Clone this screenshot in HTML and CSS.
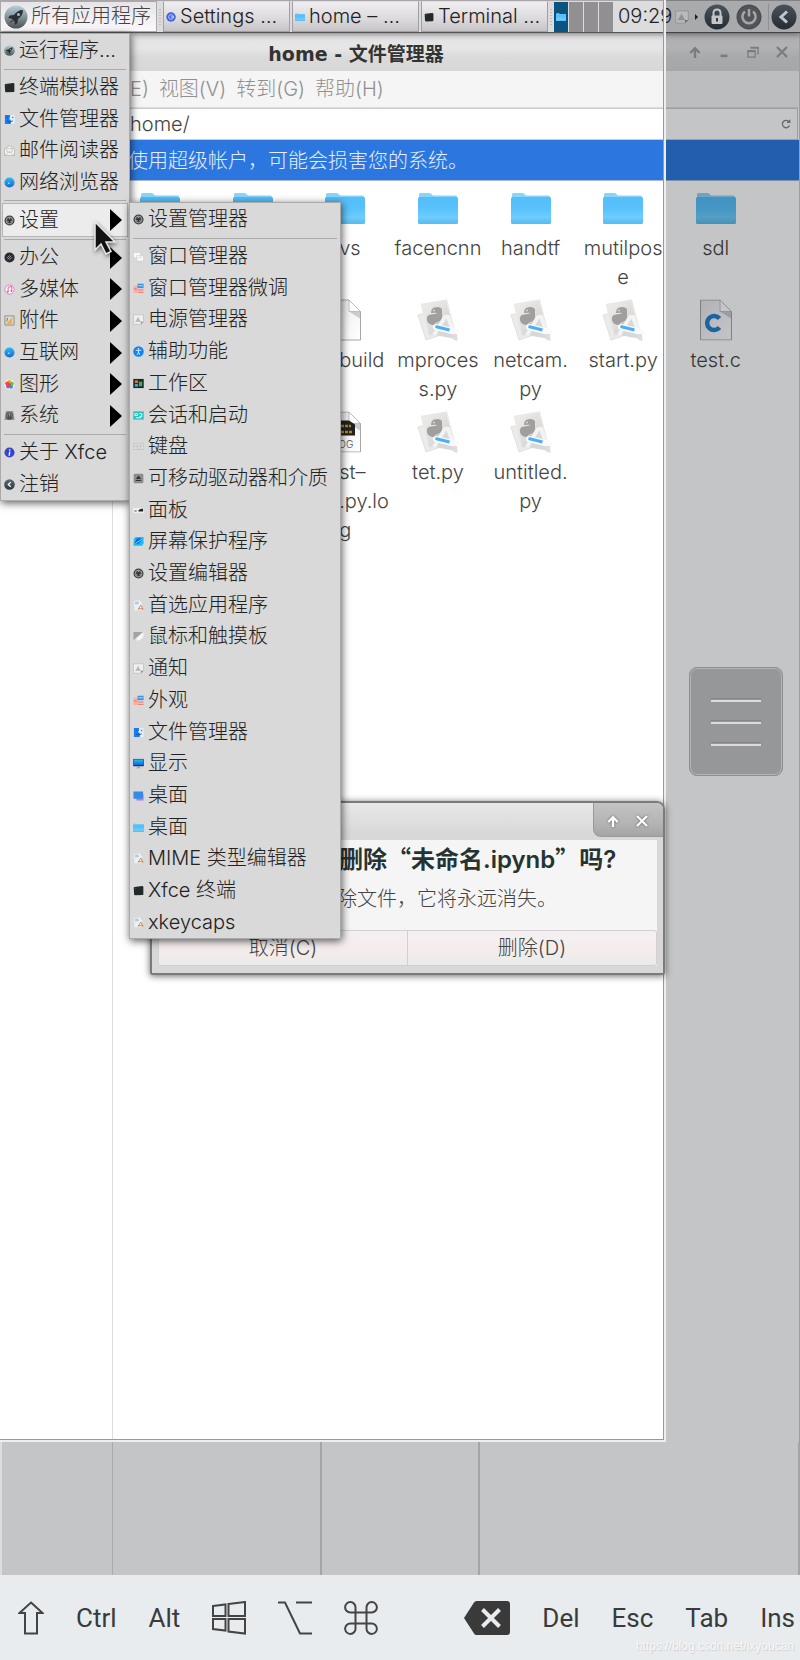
FILE: index.html
```html
<!DOCTYPE html>
<html lang="zh-CN">
<head>
    <meta charset="UTF-8">
    <meta name="viewport" content="width=device-width, initial-scale=1">
    <title>home - 文件管理器</title>
    <link rel="stylesheet" href="styles.css">
</head>
<body>
    <!-- icon sprite -->
    <svg class="sprite" aria-hidden="true">
        <defs>
            <linearGradient id="g-folder" x1="0" y1="0" x2="0" y2="1"><stop offset="0" stop-color="#55bdf9"/><stop offset=".4" stop-color="#58c1fb"/><stop offset=".75" stop-color="#6dcdfd"/><stop offset="1" stop-color="#5ab9ee"/></linearGradient>
            <linearGradient id="g-dark" x1="0" y1="0" x2="0" y2="1"><stop offset="0" stop-color="#5f6a73"/><stop offset="1" stop-color="#2c353d"/></linearGradient>
            <linearGradient id="g-rocket" x1="0" y1="0" x2="0" y2="1"><stop offset="0" stop-color="#b9d0da"/><stop offset="1" stop-color="#4d5458"/></linearGradient>
            <linearGradient id="g-paper" x1="0" y1="0" x2="1" y2="1"><stop offset="0" stop-color="#e6e4e6"/><stop offset=".5" stop-color="#f5f3f6"/><stop offset="1" stop-color="#ffffff"/></linearGradient>
            <linearGradient id="g-photo" x1="0" y1="0" x2="1" y2="1"><stop offset="0" stop-color="#f0efee"/><stop offset="1" stop-color="#cfcdcc"/></linearGradient>
            <linearGradient id="g-blue" x1="0" y1="0" x2="0" y2="1"><stop offset="0" stop-color="#1cc0fa"/><stop offset="1" stop-color="#1667d8"/></linearGradient>
        </defs>
        <symbol id="i-folder" viewBox="0 0 40 32">
            <path fill="#86d6fb" d="M1 8V2.500Q1 1 2.500 1H11q1.500 0 2.500 1l1.500 1.500H37.500Q39 3.500 39 5v4H1z"/>
            <path fill="url(#g-folder)" d="M0 6.500Q0 5 1.500 5H38.500Q40 5 40 6.500V30.500Q40 32 38.500 32H1.500Q0 32 0 30.500z"/>
        </symbol>
        <symbol id="i-rocket" viewBox="0 0 24 24">
            <circle cx="12" cy="12" r="11.500" fill="url(#g-rocket)"/>
            <path fill="#2b3033" d="M19 5c-4 0-7 2-9 5l-4 .5L4 13l3.500.5 3 3L11 20l2.500-2 .5-4c3-2 5-5 5-9zM8 15l-2.500 3.500L9 16z"/>
            <circle cx="14.500" cy="9.500" r="1.500" fill="#a9bac2"/>
        </symbol>
        <symbol id="i-term" viewBox="0 0 12 12"><path fill="#23282a" d="M1.500 2.200 10 1.200Q11.200 1.200 11.300 2.300V10q0 1-1 1L2.500 11.300Q1.300 11.200 1.200 10L.8 3.200Q.8 2.400 1.500 2.200z"/><path fill="#8a3b34" d="M2 3h1.500v1H2z"/></symbol>
        <symbol id="i-finder" viewBox="0 0 12 12"><path fill="#1b7df2" d="M1 1h6L6 6h1.500v5H1z"/><path fill="#e4effb" d="M7 1h4.500v10H7.500V6H6z"/><path fill="none" stroke="#124a91" d="M3 7.500q3 2.500 6.500 0M3.500 3v1.500M9.500 3v1.500"/></symbol>
        <symbol id="i-mail" viewBox="0 0 12 12"><path fill="#f5f4f2" stroke="#aaa7a3" stroke-width=".7" d="M.5 4.500 6 .7l5.500 3.800v7h-11z"/><path fill="none" stroke="#b5b1ab" stroke-width=".7" d="M3 4h6v3L6 8.500 3 7zM.5 11.500 6 7l5.500 4.500"/></symbol>
        <symbol id="i-safari" viewBox="0 0 12 12"><circle cx="6" cy="6" r="5.500" fill="url(#g-blue)"/><path fill="#d5ecfb" d="M5.300 5.500 6.500 6.700 3.800 8.200z"/><path fill="#c9655f" d="M8.500 3.500 6.700 6.700 5.300 5.300z"/></symbol>
        <symbol id="i-gear" viewBox="0 0 12 12"><circle cx="6" cy="6" r="5.500" fill="#45484b"/><circle cx="6" cy="6" r="3.600" fill="none" stroke="#a4a7a9"/><path stroke="#b4b6b8" stroke-width=".8" d="M6 6V2.500M6 6l3 2M6 6 3 8"/><circle cx="6" cy="6" r="1.300" fill="#25282a"/></symbol>
        <symbol id="i-office" viewBox="0 0 12 12"><circle cx="6" cy="6" r="5.500" fill="#272a2f"/><path fill="none" stroke="#9ea1a5" d="m4 8 4-4M3.300 6.500 6 3.800M6 8.500l2.700-2.700"/></symbol>
        <symbol id="i-music" viewBox="0 0 12 12"><circle cx="6" cy="6" r="5" fill="#fff" stroke="#d672d8"/><path fill="none" stroke="#ee4a70" d="M4.500 8.500v-5l4-.8v5"/><circle cx="4" cy="8.400" r="1" fill="#a84df0"/><circle cx="8" cy="7.600" r="1" fill="#ee4a70"/></symbol>
        <symbol id="i-tools" viewBox="0 0 12 12"><path fill="#dfdcd5" stroke="#8c8a86" d="M1 1h10v10H1z"/><path fill="#f0b345" d="m2 10 7-8v8z"/><path stroke="#8f6a2c" d="m4 3-1 4"/></symbol>
        <symbol id="i-photos" viewBox="0 0 12 12"><circle cx="6" cy="6" r="5.500" fill="#f6f4ee"/><circle cx="6" cy="3.500" r="2.300" fill="#f8a62b"/><circle cx="3.600" cy="5" r="2.300" fill="#ef4b3a"/><circle cx="4.500" cy="8" r="2.300" fill="#b44fb1"/><circle cx="7.500" cy="8.200" r="2.300" fill="#2e8fdd"/><circle cx="8.500" cy="5.200" r="2.300" fill="#6fc03c"/><circle cx="6" cy="6" r="1.500" fill="#e9432b"/></symbol>
        <symbol id="i-system" viewBox="0 0 12 12"><path fill="#8d9496" d="M2 1h8l1.500 10H.5z"/><circle cx="6" cy="6.500" r="4" fill="#4b5052"/><path fill="none" stroke="#9ea3a5" stroke-width=".8" d="M3.500 8a2.800 2.800 0 1 1 5 0M6 4v3"/></symbol>
        <symbol id="i-info" viewBox="0 0 12 12"><circle cx="6" cy="6" r="5.500" fill="#3446cf"/><path stroke="#fff" stroke-width="1.500" d="M6.200 2.500v1.500M6.200 5 5.700 9.500"/></symbol>
        <symbol id="i-back" viewBox="0 0 26 26"><circle cx="13" cy="13" r="12.500" fill="url(#g-dark)"/><path fill="none" stroke="#fff" stroke-width="3" d="m16 7.500-6 5.500 6 5.500"/></symbol>
        <symbol id="i-windows" viewBox="0 0 12 12"><path fill="#f8f8f8" stroke="#c4c4c4" stroke-width=".5" d="M.5 1.500h8v6h-8zM4 5h7.500v6H4z"/></symbol>
        <symbol id="i-look" viewBox="0 0 12 12"><path fill="#f6b3a5" d="M.5 3h5v8h-5z"/><path fill="#3c8fe8" d="M5 .8h6.500v5H5z"/><path fill="#f3d9d6" d="M5.500 6h6v5.200h-6z"/><path fill="#e8695b" d="M1 6h3v1H1zM5.500 7h6v1.200h-6zM5.500 9.500h6v1.200h-6z"/><path fill="#cfe3fa" d="M6 2.500h4.500v1H6z"/></symbol>
        <symbol id="i-notice" viewBox="0 0 14 14"><path fill="#f1f1f0" stroke="#aaa" stroke-width=".6" d="M.7 1h12.600v9L10 13H.7z"/><path fill="#888" d="M13.300 10 10 13v-3z"/><path fill="#bcbcba" d="m6.500 3.500 3.800 6.800H2.700z"/></symbol>
        <symbol id="i-access" viewBox="0 0 12 12"><circle cx="6" cy="6" r="5.700" fill="#0b84f5"/><circle cx="6" cy="3" r=".9" fill="#fff"/><path fill="none" stroke="#fff" stroke-width=".9" d="M3 4.700h6M6 4.700v2L4.600 9.600M6 6.700l1.400 2.900"/></symbol>
        <symbol id="i-space" viewBox="0 0 12 12"><path fill="#222528" d="M.3 1h11.400v10H.3z"/><path fill="#d8732b" d="M2 2.500h3.500v3H2z"/><path fill="#39a2e0" d="M2 6.500h3.500v3H2z"/><path fill="#2fb84c" d="M6.500 4H10v5H6.500z"/></symbol>
        <symbol id="i-session" viewBox="0 0 12 12"><path fill="#23c4bd" d="M.3 1.500h11.400v9H.3z"/><path fill="none" stroke="#fff" d="M2 4h3v2H2zM3 8.500h6M7 4h2.500v3H7"/></symbol>
        <symbol id="i-keyboard" viewBox="0 0 12 12"><path fill="#e1e1e1" stroke="#b5b5b5" stroke-width=".6" d="M.4 2.500h11.200v6.800H.4z"/><path stroke="#a9a9a9" stroke-width=".7" stroke-dasharray="1 .5" d="M1.500 4.500h9M1.500 6h9M3 7.700h6"/></symbol>
        <symbol id="i-eject" viewBox="0 0 12 12"><rect x=".7" y=".7" width="10.600" height="10.600" rx="1.500" fill="#8d8d8d"/><path fill="#333" d="M6 2.800 9 6.500H3zM3 7.500h6v1.200H3z"/></symbol>
        <symbol id="i-panel" viewBox="0 0 12 12"><path fill="#f4f4f4" d="M.3 3.500h11.400v5H.3z"/><path fill="#222" d="M6 5.500 9 4h2v3H6z"/><path fill="#999" d="M1.500 5.500H4v2H1.500z"/></symbol>
        <symbol id="i-saver" viewBox="0 0 12 12"><path fill="#19bdf5" d="M1 3 3 1h8.500v7L10 10.500H.5z"/><path fill="#1668d9" d="m2 7 2-4 4-1 1 3-2 3-3 1z"/><path stroke="#7be6ff" d="m3 8 6-4"/></symbol>
        <symbol id="i-app" viewBox="0 0 12 12"><path fill="#eef1f2" d="m1 1 6-.6 3 3.600L9.500 11 1.800 11.500z"/><path fill="#a9cdef" d="m2 2 4-.5.400 3-4 .5z"/><path fill="none" stroke="#cf8a4e" d="m5.500 10.500 3-5 2.500 5"/><path stroke="#c0655a" stroke-width=".8" d="M6 9.500h5"/></symbol>
        <symbol id="i-mouse" viewBox="0 0 12 12"><path fill="#a3a3a3" d="M.5 1h10L.5 10z"/><path fill="#f7f7f7" d="M11.500 1.500v4Q10 9.500 5 10.500q-2-.5-1-3z"/></symbol>
        <symbol id="i-display" viewBox="0 0 12 12"><path fill="#223b52" d="M.2 1h11.600v8H.2z"/><path fill="url(#g-blue)" d="M.8 1.600h10.400v6H.8z"/><path fill="#8f9496" d="M5 9h2v1.500h1.500v.8h-5v-.8H5z"/></symbol>
        <symbol id="i-desktop" viewBox="0 0 12 12"><path fill="#b77be2" d="M2 5h9.500v6.500H4z"/><path fill="#348be8" d="M.5 1.500h10.500v7L9 9.500H.5z"/></symbol>
        <symbol id="i-settings" viewBox="0 0 12 12"><circle cx="6" cy="6" r="5.700" fill="#4263e2"/><circle cx="6" cy="6" r="2.800" fill="none" stroke="#b9c7fb" stroke-width="1.200"/><path stroke="#fff" d="M6 6h3.500"/></symbol>
        <symbol id="i-python" viewBox="0 0 42 42">
            <path fill="#ecebeb" stroke="#d3d2d1" stroke-width=".6" d="m1 16 8-2 12 23-12 4z"/>
            <path fill="url(#g-photo)" stroke="#e9e8e7" stroke-width="1.400" d="M4.500 5.500 29.500 1l8 31-25.500 5z"/>
            <path fill="#a09f9e" d="M16 9q6-2.500 9 1v9q0 3-3 3.500-4 .5-4.500 3.500-6 0-7.500-4.500-1-5.500 4-6l5.500-.8v-1L14 14q0-3.500 2-5z"/>
            <circle cx="17" cy="11.500" r="1" fill="#d8d7d6"/>
            <path fill="#c3c2c1" d="M26 16q4 0 4 5 0 5-6 7-5 1-6-1 1-4 5-4 3-1 3-7z"/>
            <path fill="#d9d8d8" stroke="#f3f3f3" stroke-width="4" d="m17 36 11-18h3l8 22"/>
            <path stroke="#fafafa" stroke-width="6" stroke-linecap="round" d="m19 28 20 5"/>
            <path stroke="#4daef6" stroke-width="3" d="m18.500 27.500 14 3.500"/>
            <path fill="#dedddd" d="m35 35 5 0 .5 7-4-1z"/>
        </symbol>
        <symbol id="i-file" viewBox="0 0 32 41"><path fill="url(#g-paper)" stroke="#a8a6a8" d="M.5.500H20L31.500 12V40.500H.5z"/><path fill="#b0aeb0" opacity=".6" d="M20 12h11v7z"/><path fill="#fff" stroke="#b5b3b5" stroke-width=".8" d="M20 .5V12h11.500z"/></symbol>
        <symbol id="i-arrow-up" viewBox="0 0 12 12"><path fill="none" stroke="currentColor" stroke-width="2.400" d="M6 12V2.500M1.300 7 6 2.200 10.700 7"/></symbol>
        <symbol id="i-cross" viewBox="0 0 12 12"><path stroke="currentColor" stroke-width="2.300" d="m1 1 10 10M11 1 1 11"/></symbol>
    </svg>

    <div class="desktop">
        <header class="panel">
            <button class="apps-button"><svg class="rocket"><use href="#i-rocket"/></svg>所有应用程序</button>
            <span class="handle"></span>
            <nav class="tasks">
                <button><svg><use href="#i-settings"/></svg>Settings …</button>
                <button><svg><use href="#i-folder"/></svg>home – …</button>
                <button><svg><use href="#i-term"/></svg>Terminal …</button>
            </nav>
            <span class="handle"></span>
            <div class="pager">
                <button class="current" aria-label="工作区 1"><svg><use href="#i-folder"/></svg></button>
                <button aria-label="工作区 2"></button>
                <button aria-label="工作区 3"></button>
                <button aria-label="工作区 4"></button>
            </div>
            <time class="clock">09:29</time>
            <div class="tray">
                <svg class="tray-note"><use href="#i-notice"/></svg>
                <span class="tray-more"></span>
                <button aria-label="锁定"><svg viewBox="0 0 26 26"><circle cx="13" cy="13" r="12.500" fill="url(#g-dark)"/><path fill="none" stroke="#fff" stroke-width="2" d="M9.500 12V9q0-3.500 3.500-3.500T16.500 9v3"/><rect x="7.500" y="11.500" width="11" height="8.500" rx="1" fill="#fff"/><path stroke="#414b54" stroke-width="2" d="M13 14v3.500"/></svg></button>
                <button aria-label="关机"><svg viewBox="0 0 26 26"><circle cx="13" cy="13" r="12.500" fill="#5e6164"/><circle cx="13" cy="13" r="11" fill="#696c6f"/><path fill="none" stroke="#d5d6d7" stroke-width="2.500" d="M9 7.500a6.600 6.600 0 1 0 8 0M13 5v7.500"/></svg></button>
                <button class="logout" aria-label="注销"><svg><use href="#i-back"/></svg></button>
            </div>
        </header>

        <section class="window">
            <div class="titlebar">
                <h1>home - 文件管理器</h1>
                <div class="window-buttons">
                    <button aria-label="卷起"><svg viewBox="0 0 12 12"><use href="#i-arrow-up"/></svg></button>
                    <button aria-label="最小化"><svg viewBox="0 0 14 14"><path stroke="currentColor" stroke-width="3" d="M3 11.500h8"/></svg></button>
                    <button aria-label="最大化"><svg viewBox="0 0 14 14"><path fill="none" stroke="currentColor" stroke-width="1.500" d="M1 5.500h8.500V13H1zM1 6.500h8.500M4.500 3V1.500H13V9h-1.500M4.500 2.500H13"/></svg></button>
                    <button aria-label="关闭"><svg viewBox="0 0 12 12"><use href="#i-cross"/></svg></button>
                </div>
            </div>
            <nav class="menubar">
                <button>E)</button>
                <button>视图(V)</button>
                <button>转到(G)</button>
                <button>帮助(H)</button>
            </nav>
            <div class="pathbar">
                <input type="text" value="home/" aria-label="路径">
                <button aria-label="重新载入"><svg viewBox="0 0 10 10"><path fill="none" stroke="#858585" stroke-width="1.300" d="M8.500 6.500A3.700 3.700 0 1 1 8 2.700M8.700.8v2.500H6"/></svg></button>
            </div>
            <p class="warning">使用超级帐户，可能会损害您的系统。</p>
            <div class="content">
                <aside class="sidebar"></aside>
                <div class="files">
                    <a href="#" aria-label="文件夹"><svg class="folder"><use href="#i-folder"/></svg></a>
                    <a href="#" aria-label="文件夹"><svg class="folder"><use href="#i-folder"/></svg></a>
                    <a href="#" class="covered"><svg class="folder"><use href="#i-folder"/></svg><span>vs</span></a>
                    <a href="#"><svg class="folder"><use href="#i-folder"/></svg><span>facencnn</span></a>
                    <a href="#"><svg class="folder"><use href="#i-folder"/></svg><span>handtf</span></a>
                    <a href="#"><svg class="folder"><use href="#i-folder"/></svg><span>mutilpos<br>e</span></a>
                    <a href="#"><svg class="folder"><use href="#i-folder"/></svg><span>sdl</span></a>

                    <a href="#" class="covered third"><svg class="file"><use href="#i-file"/></svg><span>build</span></a>
                    <a href="#"><svg class="python"><use href="#i-python"/></svg><span>mproces<br>s.py</span></a>
                    <a href="#"><svg class="python"><use href="#i-python"/></svg><span>netcam.<br>py</span></a>
                    <a href="#"><svg class="python"><use href="#i-python"/></svg><span>start.py</span></a>
                    <a href="#"><svg class="file" viewBox="0 0 32 41"><use href="#i-file" width="32" height="41"/><path fill="none" stroke="#2281c9" stroke-width="4.500" d="M19.500 19a7 7 0 1 0 0 9"/></svg><span>test.c</span></a>

                    <a href="#" class="covered third"><svg class="file" viewBox="0 0 32 41"><use href="#i-file" width="32" height="41"/><path fill="#24211c" d="M2 9h18l6 4v11H2z"/><path stroke="#a58a35" stroke-width="2.500" stroke-dasharray="3 1" d="M4 14.500h18M4 20.500h20"/><text class="log" x="4" y="36">LOG</text></svg><span>st–<br>.py.lo<br>g</span></a>
                    <a href="#"><svg class="python"><use href="#i-python"/></svg><span>tet.py</span></a>
                    <a href="#"><svg class="python"><use href="#i-python"/></svg><span>untitled.<br>py</span></a>
                </div>
            </div>
        </section>

        <!-- visible part of the screen, the rest is dimmed -->
        <div class="viewport-frame"></div>
        <div class="mouse-buttons"><span></span><span></span><span></span></div>
        <button class="pad-menu" aria-label="菜单"><span></span><span></span><span></span></button>

        <section class="dialog" role="dialog">
            <div class="dialog-buttons">
                <button aria-label="卷起"><svg viewBox="0 0 12 12"><use href="#i-arrow-up"/></svg></button>
                <button aria-label="关闭"><svg viewBox="0 0 12 12"><use href="#i-cross"/></svg></button>
            </div>
            <div class="dialog-body">
                <h2>删除<span class="quote">“</span>未命名.ipynb<span class="quote">”</span>吗?</h2>
                <p>除文件，它将永远消失。</p>
                <div class="actions">
                    <button>取消(C)</button>
                    <button>删除(D)</button>
                </div>
            </div>
        </section>

        <ul class="menu main-menu">
            <li><button><svg><use href="#i-rocket"/></svg>运行程序...</button></li>
            <li class="separator"></li>
            <li><button><svg><use href="#i-term"/></svg>终端模拟器</button></li>
            <li><button><svg><use href="#i-finder"/></svg>文件管理器</button></li>
            <li><button><svg><use href="#i-mail"/></svg>邮件阅读器</button></li>
            <li><button><svg><use href="#i-safari"/></svg>网络浏览器</button></li>
            <li class="separator"></li>
            <li class="more active"><button><svg><use href="#i-gear"/></svg>设置</button></li>
            <li class="separator"></li>
            <li class="more"><button><svg><use href="#i-office"/></svg>办公</button></li>
            <li class="more"><button><svg><use href="#i-music"/></svg>多媒体</button></li>
            <li class="more"><button><svg><use href="#i-tools"/></svg>附件</button></li>
            <li class="more"><button><svg><use href="#i-safari"/></svg>互联网</button></li>
            <li class="more"><button><svg><use href="#i-photos"/></svg>图形</button></li>
            <li class="more"><button><svg><use href="#i-system"/></svg>系统</button></li>
            <li class="separator"></li>
            <li><button><svg><use href="#i-info"/></svg>关于 Xfce</button></li>
            <li><button><svg><use href="#i-back"/></svg>注销</button></li>
        </ul>

        <ul class="menu sub-menu">
            <li><button><svg><use href="#i-gear"/></svg>设置管理器</button></li>
            <li class="separator"></li>
            <li><button><svg><use href="#i-windows"/></svg>窗口管理器</button></li>
            <li><button><svg><use href="#i-look"/></svg>窗口管理器微调</button></li>
            <li><button><svg><use href="#i-notice"/></svg>电源管理器</button></li>
            <li><button><svg><use href="#i-access"/></svg>辅助功能</button></li>
            <li><button><svg><use href="#i-space"/></svg>工作区</button></li>
            <li><button><svg><use href="#i-session"/></svg>会话和启动</button></li>
            <li><button><svg><use href="#i-keyboard"/></svg>键盘</button></li>
            <li><button><svg><use href="#i-eject"/></svg>可移动驱动器和介质</button></li>
            <li><button><svg><use href="#i-panel"/></svg>面板</button></li>
            <li><button><svg><use href="#i-saver"/></svg>屏幕保护程序</button></li>
            <li><button><svg><use href="#i-gear"/></svg>设置编辑器</button></li>
            <li><button><svg><use href="#i-app"/></svg>首选应用程序</button></li>
            <li><button><svg><use href="#i-mouse"/></svg>鼠标和触摸板</button></li>
            <li><button><svg><use href="#i-notice"/></svg>通知</button></li>
            <li><button><svg><use href="#i-look"/></svg>外观</button></li>
            <li><button><svg><use href="#i-finder"/></svg>文件管理器</button></li>
            <li><button><svg><use href="#i-display"/></svg>显示</button></li>
            <li><button><svg><use href="#i-desktop"/></svg>桌面</button></li>
            <li><button><svg><use href="#i-folder"/></svg>桌面</button></li>
            <li><button><svg><use href="#i-app"/></svg>MIME 类型编辑器</button></li>
            <li><button><svg><use href="#i-term"/></svg>Xfce 终端</button></li>
            <li><button><svg><use href="#i-app"/></svg>xkeycaps</button></li>
        </ul>

        <svg class="cursor" viewBox="0 0 26 36"><path fill="#111" stroke="#e8e8e8" stroke-width="1.500" d="M2 2v28l6-6 5 10 5-2.500-5-9.500h9z"/></svg>
    </div>

    <footer class="keys">
        <button aria-label="Shift"><svg class="shift" viewBox="0 0 26 34"><path d="M13 1.500 24.500 12H19v20.500H7V12H1.500z"/></svg></button>
        <button>Ctrl</button>
        <button>Alt</button>
        <button aria-label="Windows"><svg viewBox="0 0 34 34"><path d="M1 5 13.500 3.500V15H1zM16.500 3 33 1v14H16.500zM1 18h12.500v11.500L1 28zM16.500 18H33v14.500l-16.500-2z"/></svg></button>
        <button aria-label="Option"><svg viewBox="0 0 34 34"><path d="M0 1.500h7L22 32.500h12M18 1.500h16"/></svg></button>
        <button aria-label="Command"><svg viewBox="0 0 34 34"><path d="M11.500 11.500H6.500a5.200 5.200 0 1 1 5-5v21a5.200 5.200 0 1 1-5-5h21a5.200 5.200 0 1 1-5 5v-21a5.200 5.200 0 1 1 5 5z"/></svg></button>
        <button class="backspace" aria-label="Backspace"><svg viewBox="0 0 46 34"><path fill="#3a3a3a" stroke="none" d="M12.500 0H43q3 0 3 3v28q0 3-3 3H12.500Q11 34 10 32.500L0 17 10 1.500Q11 0 12.500 0z"/><path class="x" d="m18.500 8.500 17 17M35.500 8.500l-17 17"/></svg></button>
        <button>Del</button>
        <button>Esc</button>
        <button>Tab</button>
        <button>Ins</button>
        <span class="watermark">https://blog.csdn.net/lxyoucan</span>
    </footer>
</body>
</html>
```
FILE: styles.css
```css
*{
    padding: 0;
    margin: 0;
    box-sizing: border-box;
}
body{
    min-height: 100vh;
    display: flex;
    flex-direction: column;
    font: 300 20px/29px Inter, "Noto Sans CJK SC", sans-serif;
    color: #222;
    background: #fff;
}
button, input{
    font: inherit;
    color: inherit;
    border: 0;
    background: none;
}
svg{
    display: block;
    flex: none;
}
ul{
    list-style: none;
}
a{
    color: inherit;
    text-decoration: none;
}
.sprite{
    position: absolute;
    width: 0;
    height: 0;
}
.desktop{
    flex: 1;
    display: flex;
    flex-direction: column;
    position: relative;
    overflow: hidden;
}

/* top panel */
.panel{
    height: 33px;
    display: flex;
    align-items: center;
    background: #dcdcdc;
    border-top: 1px solid #a8a6a8;
    border-bottom: 1px solid #555;
    box-shadow: 0 1px 6px rgba(0, 0, 0, .5);
    position: relative;
    z-index: 1;
    white-space: nowrap;
}
.panel > *{
    flex: none;
}
.apps-button{
    width: 157px;
    height: 31px;
    display: flex;
    align-items: center;
    gap: 3px;
    padding-left: 3px;
    border: 1px solid #aaa;
    background: linear-gradient(#e6e4e6, #fbf9fb);
    color: #444;
}
.rocket{
    width: 24px;
    height: 24px;
}
.handle{
    width: 6px;
    height: 16px;
    background: repeating-linear-gradient(#bbb 0 1px, transparent 1px 3px) center / 2px 100% no-repeat;
}
.tasks{
    display: flex;
    gap: 2px;
}
.tasks button{
    width: 127px;
    height: 31px;
    display: flex;
    align-items: center;
    gap: 4px;
    padding-left: 2px;
    border: 1px solid #a29fa2;
    border-top-color: #ddd;
    background: linear-gradient(#efedef, #dbd9db 60%, #c6c4c6);
}
.tasks svg{
    width: 10px;
    height: 10px;
}
.pager{
    display: flex;
    gap: 1px;
    height: 30px;
}
.pager button{
    width: 14px;
    background: #928f92;
}
.pager .current{
    padding: 2px;
    background: #0b5380;
}
.pager svg{
    width: 10px;
    height: 8px;
}
.clock{
    margin-left: 5px;
    width: 57px;
}
.panel .tray{
    flex: 1;
    display: flex;
    align-items: center;
    gap: 6px;
    padding-right: 3px;
}
.tray svg{
    width: 26px;
    height: 26px;
}
.tray .tray-note{
    width: 14px;
    height: 14px;
}
.tray-more{
    border: 3px solid transparent;
    border-left: 3px solid #222;
    border-right: 0;
}
.tray .logout{
    margin-left: auto;
    padding-left: 2px;
    border-left: 1px solid #bbb;
}

/* file manager window */
.window{
    flex: 1;
    display: flex;
    flex-direction: column;
    border-right: 1px solid #ccc;
}
.titlebar{
    height: 38px;
    display: flex;
    align-items: center;
    padding: 0 10px 0 24px;
    background: linear-gradient(#e6e4e6, #e6e6e6 40%, #dadada 65%, #d8d8d8);
}
.titlebar h1{
    flex: 1;
    text-align: center;
    font: bold 19px "DejaVu Sans", "Noto Sans CJK SC", sans-serif;
    color: #333;
}
.window-buttons{
    display: flex;
    gap: 15px;
    color: #a0a0a0;
}
.window-buttons svg{
    width: 14px;
    height: 12px;
}
.menubar{
    height: 37px;
    display: flex;
    align-items: center;
    gap: 10px;
    padding-left: 130px;
    background: #f5f5f5;
    border-bottom: 1px solid #ddd;
    color: #8f9090;
}
.pathbar{
    height: 32px;
    display: flex;
    align-items: center;
    margin-right: 1px;
    padding-right: 6px;
    border: 1px solid #ccc;
    background: #fff;
}
.pathbar input{
    flex: 1;
    min-width: 0;
    height: 28px;
    padding-left: 129px;
    color: #444;
}
.pathbar svg{
    width: 10px;
    height: 10px;
}
.warning{
    height: 41px;
    padding-left: 128px;
    line-height: 42px;
    background: #2c77df;
    border-bottom: 1px solid #a6b8d4;
    color: #e4eefc;
}
.content{
    flex: 1;
    display: flex;
}
.sidebar{
    width: 113px;
    border-right: 1px solid #ddd;
}
.files{
    flex: 1;
    display: grid;
    grid-template-columns: repeat(7, 1fr);
    grid-auto-rows: 112px;
    padding: 6px 37px 0 1px;
}
.files a{
    display: flex;
    flex-direction: column;
    align-items: center;
    text-align: center;
    white-space: nowrap;
    color: #444;
}
.files svg{
    margin-bottom: 5px;
}
.folder{
    width: 40px;
    height: 42px;
}
.python{
    width: 42px;
    height: 42px;
}
.file{
    width: 32px;
    height: 42px;
}
.files .covered span{
    align-self: flex-start;
    padding-left: 40px;
    text-align: left;
}
.third{
    grid-column-start: 3;
}
.log{
    font-size: 10px;
    fill: #555;
}

/* dimmed area and touch controls */
.viewport-frame{
    position: absolute;
    top: 0;
    left: 0;
    right: 134px;
    bottom: 133px;
    border-right: 2px solid #eee;
    border-bottom: 2px solid #eee;
    box-shadow: inset -1px -1px 0 #999, 0 0 0 200px rgba(10, 14, 22, .24);
    z-index: 2;
    clip-path: inset(0 -200px -200px 0);
    pointer-events: none;
}
.mouse-buttons{
    position: absolute;
    left: 0;
    right: 0;
    bottom: 0;
    height: 133px;
    display: grid;
    grid-template-columns: 320px 158px 1fr;
    border-left: 2px solid #ddd;
    z-index: 2;
}
.mouse-buttons span{
    border-right: 2px solid #a5a5a7;
}
.pad-menu{
    position: absolute;
    top: 667px;
    right: 17px;
    width: 94px;
    height: 109px;
    display: flex;
    flex-direction: column;
    align-items: center;
    justify-content: center;
    gap: 18px;
    border: 1px solid #8e8f91;
    border-radius: 8px;
    background: #969799;
    box-shadow: inset 0 0 0 1px #b2b3b5;
    z-index: 3;
}
.pad-menu span{
    width: 50px;
    height: 4px;
    border-top: 1px solid #858587;
    border-bottom: 2px solid #dcdcdc;
}

/* delete dialog */
.dialog{
    position: absolute;
    top: 801px;
    left: 150px;
    width: 515px;
    padding: 37px 6px 7px;
    border: 2px solid #7b7b7b;
    border-radius: 2px 8px 2px 2px;
    background: linear-gradient(#e9e7e9, #dedede 20px, #d8d8d8 30px);
    box-shadow: 0 1px 7px rgba(0, 0, 0, .6);
    z-index: 3;
}
.dialog-buttons{
    position: absolute;
    top: 0;
    right: 0;
    width: 70px;
    height: 34px;
    display: flex;
    align-items: center;
    justify-content: center;
    gap: 17px;
    padding: 3px 2px 0 0;
    border: 1px solid #999;
    border-width: 0 0 1px 1px;
    border-radius: 0 6px 0 8px;
    background: linear-gradient(#c4c2c4, #b5b5b5 60%, #a4a4a4);
    color: #fff;
}
.dialog-buttons svg{
    width: 12px;
    height: 12px;
    overflow: visible;
    filter: drop-shadow(0 0 1px #555);
}
.dialog-body{
    background: #f5f5f5;
}
.dialog h2{
    padding-left: 181px;
    font-size: 24px;
    font-weight: 600;
    line-height: 36px;
    color: #263330;
    white-space: nowrap;
}
.quote{
    font-family: "Noto Sans CJK SC", sans-serif;
}
.dialog p{
    padding: 7px 0 16px 179px;
    color: #444;
    white-space: nowrap;
}
.actions{
    display: flex;
}
.actions button{
    flex: 1;
    height: 36px;
    border: 1px solid #d6cfd2;
    background: linear-gradient(#f3f0f3, #f5edec 50%, #ebebeb);
    color: #444;
}
.actions button + button{
    border-left: 0;
    border-radius: 0 3px 3px 0;
}

/* menus */
.menu{
    position: absolute;
    display: flex;
    flex-direction: column;
    border: 1px solid #aaa;
    background: #d9d9d9;
    box-shadow: 1px 2px 8px rgba(0, 0, 0, .65);
    white-space: nowrap;
    z-index: 4;
}
.main-menu{
    top: 33px;
    left: 0;
    width: 130px;
    height: 468px;
    padding-top: 1px;
}
.sub-menu{
    top: 202px;
    left: 129px;
    width: 212px;
    height: 737px;
    padding-top: 1px;
}
.menu li{
    flex: 1;
    display: flex;
    align-items: center;
}
.menu button{
    flex: 1;
    display: flex;
    align-items: center;
    gap: 4px;
    padding-left: 3px;
    text-align: left;
}
.menu svg{
    width: 11px;
    height: 11px;
}
.menu .separator{
    flex: none;
    height: 5px;
    margin: 0 3px;
    background: linear-gradient(#aaa, #aaa) center / 100% 1px no-repeat;
}
.more::after{
    content: "";
    margin-right: 7px;
    border: 11px solid transparent;
    border-left: 12px solid #000;
    border-right: 0;
}
.menu .active{
    margin: 0 1px;
    border: 1px solid #b5b5b5;
    background: #ececec;
}
.active button{
    padding-left: 1px;
}
.active::after{
    margin-right: 5px;
}
.cursor{
    position: absolute;
    top: 219px;
    left: 93px;
    width: 26px;
    height: 38px;
    filter: drop-shadow(1px 2px 2px rgba(0, 0, 0, .5));
    z-index: 5;
}

/* extra keys */
.keys{
    position: relative;
    height: 85px;
    display: flex;
    align-items: center;
    gap: 32px;
    padding: 0 5px 0 18px;
    background: #e8ecef;
    font: 26px Roboto, sans-serif;
    color: #3a3a3a;
}
.keys svg{
    width: 34px;
    height: 34px;
    fill: none;
    stroke: #444;
    stroke-width: 2;
}
.keys .shift{
    width: 26px;
}
.keys .backspace{
    margin-left: auto;
}
.keys .backspace svg{
    width: 46px;
}
.keys .x{
    stroke: #e8ecef;
    stroke-width: 4;
}
.watermark{
    position: absolute;
    right: 6px;
    bottom: 6px;
    font: 12px/16px "Liberation Sans", Arial, sans-serif;
    color: #f8f8f8;
    text-shadow: 1px 1px 1px #ccc;
}
```
